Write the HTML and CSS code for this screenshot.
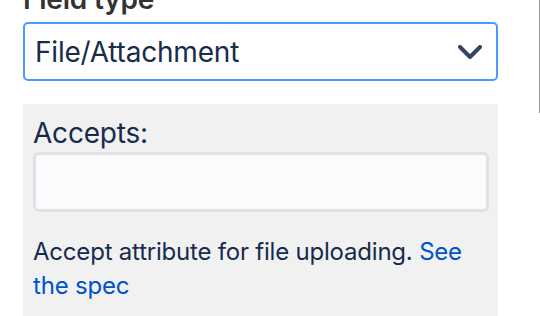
FILE: index.html
```html
<!DOCTYPE html>
<html lang="en">
<head>
    <meta charset="UTF-8">
    <title>Field settings</title>
    <link rel="stylesheet" href="styles.css">
</head>
<body>
    <div class="form">
        <label class="field-label" for="fieldType">Field type</label>
        <div class="select">
            <span class="select-value">File/Attachment</span>
            <svg class="chevron" width="24" height="14" viewBox="0 0 24 14">
                <path d="M2 2 L12 12 L22 2" fill="none" stroke="#344563" stroke-width="4" stroke-linecap="round" stroke-linejoin="round"/>
            </svg>
        </div>

        <div class="options">
            <label class="option-label" for="accepts">Accepts:</label>
            <input id="accepts" class="text-input" type="text">
            <p class="help">Accept attribute for file uploading. <a href="#">See the spec</a></p>
        </div>
    </div>
    <div class="scrollbar"></div>
</body>
</html>
```

FILE: styles.css
```css
body {
    margin: 0;
    font-family: Inter, "Noto Sans", sans-serif;
    color: #172b4d;
    background: #fff;
    letter-spacing: -0.013em;
    overflow: hidden;
}

.form {
    width: 475px;
    margin: -17px 0 0 23px;
}

.field-label {
    display: block;
    font-size: 28px;
    line-height: 32px;
    font-weight: 600;
    color: #333;
    margin-bottom: 7px;
}

.select {
    box-sizing: border-box;
    height: 59px;
    border: 2px solid #4c9aff;
    border-radius: 5px;
    display: flex;
    align-items: center;
    justify-content: space-between;
    padding: 0 14px 0 10px;
    background: #fff;
}

.select-value {
    font-size: 28px;
    line-height: 32px;
}

.options {
    margin-top: 23px;
    background: #f1f1f1;
    padding: 13px 9px 40px 10px;
}

.option-label {
    display: block;
    font-size: 28px;
    line-height: 32px;
    margin-bottom: 3px;
}

.text-input {
    display: block;
    box-sizing: border-box;
    width: 100%;
    height: 60px;
    border: 3px solid #dfe1e6;
    border-radius: 6px;
    background: #fafbfc;
    margin: 0;
}

.help {
    margin: 23px 0 0;
    font-size: 24px;
    line-height: 34px;
}

.help a {
    color: #0052cc;
    text-decoration: none;
}

.scrollbar {
    position: absolute;
    top: 0;
    right: 0;
    width: 1px;
    height: 113px;
    background: #999;
}
```
